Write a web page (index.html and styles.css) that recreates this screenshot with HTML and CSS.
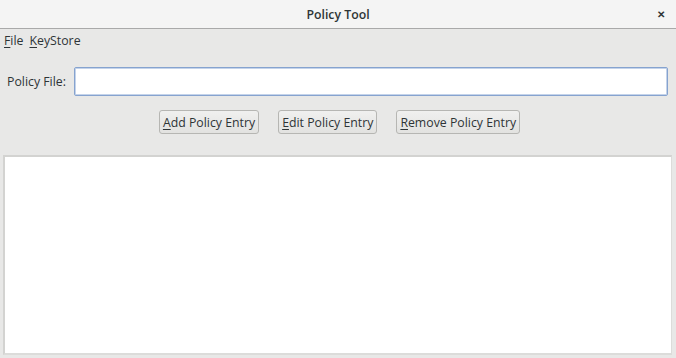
FILE: index.html
```html
<!DOCTYPE html>
<html lang="en">
<head>
  <meta charset="UTF-8">
  <title>Policy Tool</title>
  <link rel="stylesheet" href="styles.css">
</head>
<body>
  <div class="window">
    <!-- Title bar -->
    <div class="titlebar">
      <span class="title">Policy Tool</span>
      <span class="close">&#x2715;</span>
    </div>

    <!-- Menu bar -->
    <div class="menubar">
      <span class="menu"><u>F</u>ile</span>
      <span class="menu"><u>K</u>eyStore</span>
    </div>

    <!-- Policy file row -->
    <div class="file-row">
      <label for="policyFile">Policy File:</label>
      <input type="text" id="policyFile">
    </div>

    <div class="actions">
      <button><u>A</u>dd Policy Entry</button>
      <button><u>E</u>dit Policy Entry</button>
      <button><u>R</u>emove Policy Entry</button>
    </div>

    <div class="entries"></div>
  </div>
</body>
</html>
```

FILE: styles.css
```css
body {
  margin: 0;
  padding: 0;
  background: #e8e8e7;
  font-family: "Open Sans", "Noto Sans", sans-serif;
  font-size: 12.3px;
  color: #2e3436;
}
.window {
  width: 676px;
  height: 358px;
  display: flex;
  flex-direction: column;
}
.titlebar {
  height: 29px;
  background: #f4f4f4;
  border-bottom: 1px solid #a9a9a9;
  display: flex;
  align-items: center;
  justify-content: center;
  position: relative;
  box-sizing: border-box;
}
.title {
  font-weight: 600;
  font-size: 12.3px;
}
.close {
  position: absolute;
  right: 11px;
  top: 7px;
  font-size: 10px;
  font-weight: bold;
}
.menubar {
  height: 22px;
  display: flex;
  gap: 6px;
  padding-left: 4px;
  align-items: center;
}
.menu u,
button u {
  text-decoration-thickness: 1px;
  text-underline-offset: 2px;
}
.file-row {
  display: flex;
  align-items: center;
  margin-top: 16px;
  padding-left: 7px;
  padding-right: 8px;
}
.file-row label {
  width: 67px;
}
.file-row input {
  flex: 1;
  height: 29px;
  box-sizing: border-box;
  border: 1px solid #86a3cf;
  box-shadow: inset 0 0 0 1px #c4d3ea;
  border-radius: 2px;
  background: #fff;
  outline: none;
  margin: 0;
}
.actions {
  display: flex;
  justify-content: center;
  gap: 19px;
  margin-top: 14px;
  padding-left: 3px;
}
button {
  height: 24px;
  padding: 0 3px;
  border: 1px solid #b6b6b3;
  border-radius: 3px;
  background: linear-gradient(#f0f0ef, #e2e2e0);
  font-family: inherit;
  font-size: 12.3px;
  color: #2e3436;
  box-sizing: border-box;
}
.entries {
  margin: 21px 4px 3px 3px;
  flex: 1;
  background: #fff;
  border-top: 2px solid #d3d3d1;
  border-left: 2px solid #d3d3d1;
  border-right: 1px solid #dcdcda;
  border-bottom: 2px solid #dcdcda;
}
```
